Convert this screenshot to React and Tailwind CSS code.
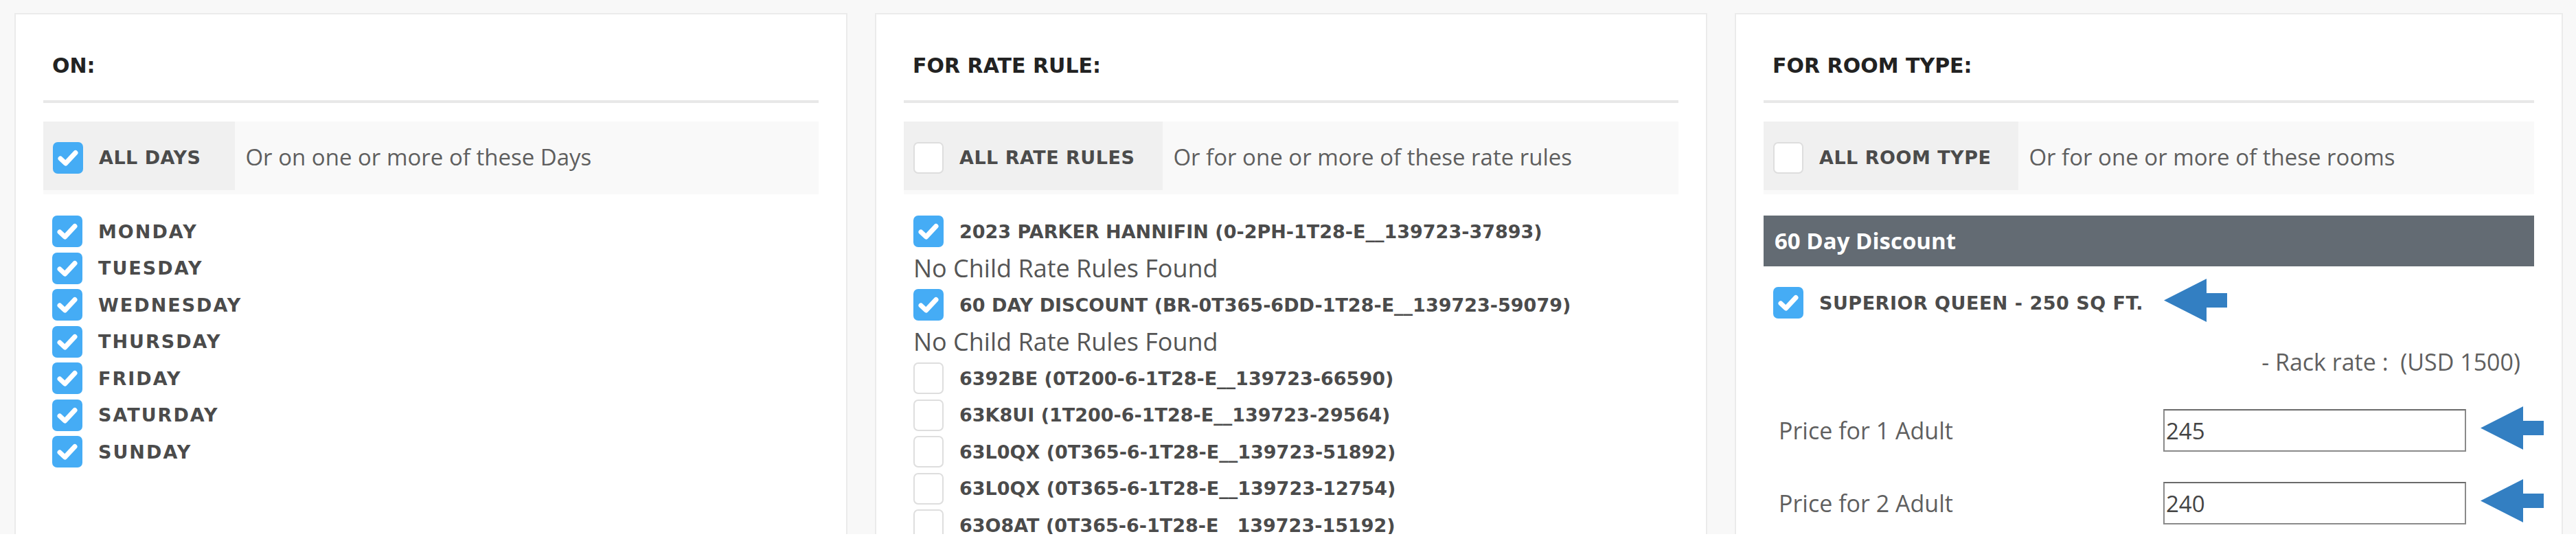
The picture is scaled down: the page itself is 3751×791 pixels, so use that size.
import React from 'react';

const labelFont = "font-['DejaVu_Sans',sans-serif] font-bold text-[27px] leading-none text-[#4b4b4b] whitespace-nowrap";
const bodyFont = "font-['Open_Sans',sans-serif] text-[33px] leading-none text-[#5f5f5f] whitespace-nowrap";

const days = ['MONDAY', 'TUESDAY', 'WEDNESDAY', 'THURSDAY', 'FRIDAY', 'SATURDAY', 'SUNDAY'];

const rateRules = [
  { name: '2023 PARKER HANNIFIN (0-2PH-1T28-E__139723-37893)', checked: true, noChild: true },
  { name: '60 DAY DISCOUNT (BR-0T365-6DD-1T28-E__139723-59079)', checked: true, noChild: true },
  { name: '6392BE (0T200-6-1T28-E__139723-66590)', checked: false },
  { name: '63K8UI (1T200-6-1T28-E__139723-29564)', checked: false },
  { name: '63L0QX (0T365-6-1T28-E__139723-51892)', checked: false },
  { name: '63L0QX (0T365-6-1T28-E__139723-12754)', checked: false },
  { name: '63O8AT (0T365-6-1T28-E__139723-15192)', checked: false },
];

function Arrow() {
  // blue pointer arrow used next to the highlighted fields
  return (
    <svg width="92" height="63" viewBox="0 0 92 63" className="mb-[8px] shrink-0">
      <path d="M0 31.5L62 0V21H92V42H62V63Z" fill="#337fc2" />
    </svg>
  );
}

function CheckBox({ checked }) {
  if (!checked) {
    return <span className="block h-[46px] w-[44px] shrink-0 rounded-[7px] border-2 border-[#dedede] bg-white" />;
  }
  return (
    <span className="flex h-[46px] w-[44px] shrink-0 items-center justify-center rounded-[7px] bg-[#45acf5]">
      <svg width="44" height="46" viewBox="0 0 44 46">
        <path d="M11 24L18.5 31L33 15.5" fill="none" stroke="#fff" strokeWidth="7" strokeLinecap="round" strokeLinejoin="round" />
      </svg>
    </span>
  );
}

function CheckRow({ checked, textClass = '', children }) {
  return (
    <div className="flex h-[46px] shrink-0 items-center gap-[23px]">
      <CheckBox checked={checked} />
      <span className={`${labelFont} ${textClass}`}>{children}</span>
    </div>
  );
}

function Card({ width, boxPad, title, allLabel, allChecked, hint, children }) {
  return (
    <div className={`${width} h-[790px] shrink-0 border-2 border-[#ebebeb] bg-white px-[40px] pt-[57px]`}>
      <h3 className="pl-[13px] font-['DejaVu_Sans',sans-serif] text-[30px] leading-[36px] font-bold text-[#222]">{title}</h3>
      <div className="mt-[32px] h-[4px] bg-[#e8e8e8]" />

      {/* "all" toggle row */}
      <div className="mt-[27px] bg-[#f9f9f9] pb-[6px]">
        <div className="flex h-[100px] items-center">
          <div className={`flex h-full shrink-0 items-center gap-[23px] bg-[#f0f0f0] pl-[14px] pt-[5px] ${boxPad}`}>
            <CheckBox checked={allChecked} />
            <span className={`${labelFont} tracking-[0.5px]`}>{allLabel}</span>
          </div>
          <span className={`pl-[15px] pt-[3px] ${bodyFont}`}>{hint}</span>
        </div>
      </div>

      <div className="mt-[31px]">{children}</div>
    </div>
  );
}

function PriceRow({ label, value, className }) {
  return (
    <div className={`flex h-[62px] items-center ${className}`}>
      <span className={`w-[582px] shrink-0 pl-[22px] ${bodyFont} text-[34px]`}>{label}</span>
      <input
        readOnly
        value={value}
        className="h-[62px] w-[441px] shrink-0 border-2 border-[#8a8a8a] border-t-[#6a6a6a] bg-white px-[2px] font-['Open_Sans',sans-serif] text-[33px] text-[#444] outline-none"
      />
      <span className="ml-[21px] flex shrink-0"><Arrow /></span>
    </div>
  );
}

export default function App() {
  return (
    <div className="h-[778px] overflow-hidden bg-[#f8f8f8]">
      <div className="flex gap-[40px] pl-[21px] pt-[19px]">
        <Card width="w-[1213px]" boxPad="pr-[50px]" title="ON:" allLabel="ALL DAYS" allChecked hint="Or on one or more of these Days">
          <div className="flex flex-col gap-[7.5px] pl-[13px]">
            {days.map(d => (
              <CheckRow key={d} checked textClass="tracking-[2px]">{d}</CheckRow>
            ))}
          </div>
        </Card>

        <Card width="w-[1212px]" boxPad="pr-[41px]" title="FOR RATE RULE:" allLabel="ALL RATE RULES" allChecked={false} hint="Or for one or more of these rate rules">
          <div className="flex flex-col gap-[7.5px] pl-[14px]">
            {rateRules.map((r, i) => (
              <React.Fragment key={i}>
                <CheckRow checked={r.checked}>{r.name}</CheckRow>
                {r.noChild && (
                  <div className={`flex h-[46px] shrink-0 items-center ${bodyFont} text-[36px] text-[#555]`}>No Child Rate Rules Found</div>
                )}
              </React.Fragment>
            ))}
          </div>
        </Card>

        <Card width="w-[1206px]" boxPad="pr-[40px]" title="FOR ROOM TYPE:" allLabel="ALL ROOM TYPE" allChecked={false} hint="Or for one or more of these rooms">
          <div className="flex h-[74px] items-center bg-[#636b73] pl-[16px] font-['Open_Sans',sans-serif] text-[33px] font-bold text-white">
            60 Day Discount
          </div>

          <div className="mt-[30px] flex h-[46px] items-center pl-[14px]">
            <CheckRow checked textClass="w-[477px] tracking-[0.5px]">SUPERIOR QUEEN - 250 SQ FT.</CheckRow>
            <span className="ml-[25px] flex shrink-0"><Arrow /></span>
          </div>

          <div className={`mt-[40px] flex h-[46px] items-center justify-end pr-[20px] whitespace-pre ${bodyFont} text-[34px]`}>
            {'- Rack rate :  (USD 1500)'}
          </div>

          <PriceRow label="Price for 1 Adult" value="245" className="mt-[46px]" />
          <PriceRow label="Price for 2 Adult" value="240" className="mt-[44px]" />
        </Card>
      </div>
    </div>
  );
}
